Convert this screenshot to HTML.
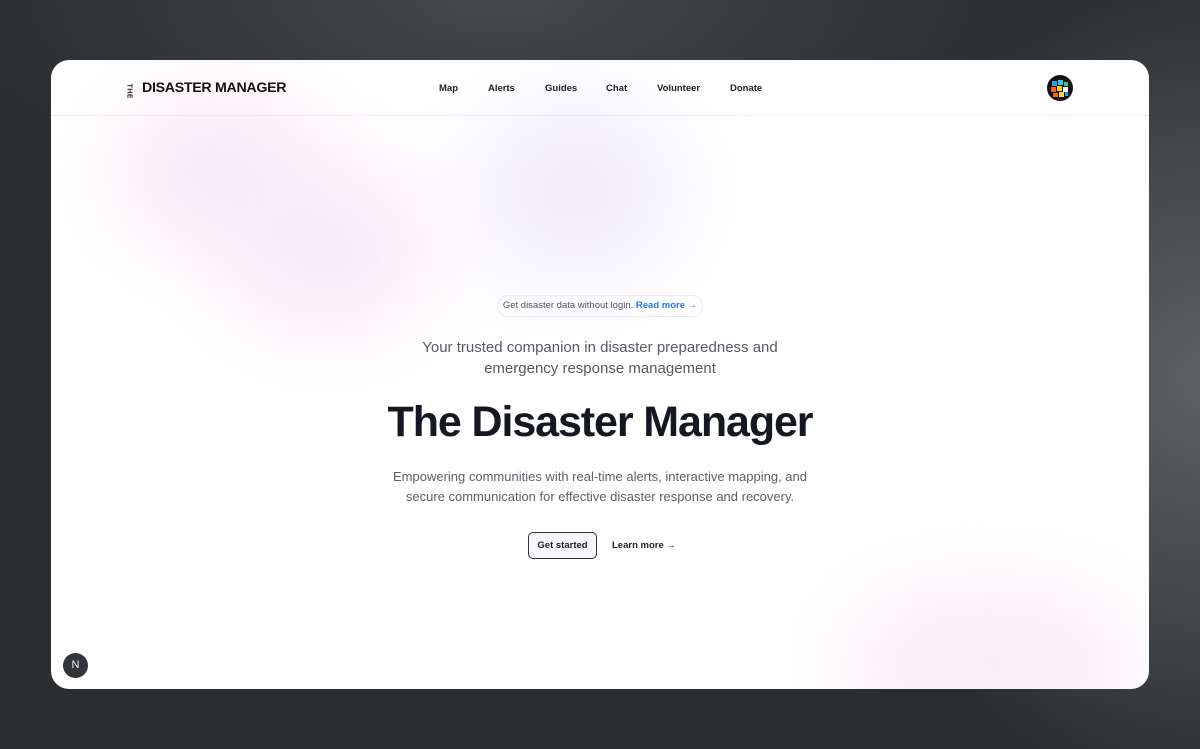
<!DOCTYPE html>
<html><head><style>
*{margin:0;padding:0;box-sizing:border-box}
body{width:1200px;height:749px;overflow:hidden;font-family:"Liberation Sans",sans-serif;
background:radial-gradient(ellipse 400px 500px at 1200px 380px,#5e6164 0%,#44474a 45%,transparent 85%),radial-gradient(ellipse 700px 260px at 500px 0px,#45484b,transparent 80%),#2b2e31;position:relative}
.card{position:absolute;left:51px;top:60px;width:1098px;height:629px;border-radius:18px;background:#fff;overflow:hidden}
.blob{position:absolute;border-radius:50%;filter:blur(50px)}
.hdr{position:absolute;left:0;top:0;width:100%;height:56px;border-bottom:1px solid #f0ecf4}
.logo{position:absolute;left:73px;top:20px;display:flex;align-items:center}
.the{font-size:7px;font-weight:bold;transform:rotate(90deg);color:#222;width:10px;letter-spacing:.5px}
.logo b{font-size:14.2px;color:#111;margin-left:8px;letter-spacing:-.3px}
nav{position:absolute;left:388px;top:23px;font-size:9.5px;font-weight:bold;color:#222}
nav span{position:absolute;white-space:nowrap}
.av{position:absolute;left:996px;top:15px;width:26px;height:26px;border-radius:50%;background:#111;overflow:hidden}
.c{position:absolute;left:0;width:1098px;text-align:center}
</style></head><body>
<div class="card">
<div class="blob" style="left:70px;top:50px;width:190px;height:120px;background:#f5e3f2"></div>
<div class="blob" style="left:180px;top:120px;width:190px;height:140px;background:#f6e4f3"></div>
<div class="blob" style="left:430px;top:50px;width:190px;height:160px;background:#ede8f9"></div>
<div class="blob" style="left:790px;top:530px;width:300px;height:150px;background:#f8ecf6"></div>
<div class="hdr">
<div class="logo"><span class="the">THE</span><b>DISASTER MANAGER</b></div>
<nav><span style="left:0">Map</span><span style="left:49px">Alerts</span><span style="left:106px">Guides</span><span style="left:167px">Chat</span><span style="left:218px">Volunteer</span><span style="left:291px">Donate</span></nav>
<div class="av"><svg width="26" height="26"><rect x="5" y="6" width="5" height="5" fill="#29a3e8"/><rect x="11" y="5" width="5" height="5" fill="#2fc6e8"/><rect x="17" y="7" width="4" height="4" fill="#35d07f"/><rect x="4" y="12" width="5" height="5" fill="#ff5a1f"/><rect x="10" y="11" width="5" height="5" fill="#f7d21f"/><rect x="16" y="12" width="5" height="5" fill="#fff"/><rect x="6" y="18" width="5" height="4" fill="#ff6a00"/><rect x="12" y="17" width="5" height="5" fill="#ffe02a"/><rect x="18" y="17" width="3" height="4" fill="#3b8bff"/></svg></div>
</div>
<div style="position:absolute;left:446px;top:235px;width:206px;height:22px;border:1px solid #ebe6f0;border-radius:11px;font-size:9.5px;color:#555;line-height:20px;text-align:center">Get disaster data without login. <span style="color:#2a7ae8;font-weight:bold">Read more →</span></div>
<div class="c" style="top:278px;font-size:15px;line-height:20.5px;color:#555a63">Your trusted companion in disaster preparedness and<br>emergency response management</div>
<div class="c" style="top:338px;font-size:43px;font-weight:bold;color:#151820;letter-spacing:-1.1px">The Disaster Manager</div>
<div class="c" style="top:407px;font-size:13px;line-height:20px;color:#5c6069">Empowering communities with real-time alerts, interactive mapping, and<br>secure communication for effective disaster response and recovery.</div>
<div style="position:absolute;left:477px;top:472px;width:69px;height:27px;border:1px solid #333;border-radius:5px;background:#f8f5fa;font-size:9.5px;font-weight:bold;color:#222;text-align:center;line-height:25px">Get started</div>
<div style="position:absolute;left:561px;top:480px;font-size:9.5px;font-weight:bold;color:#222">Learn more →</div>
<div style="position:absolute;left:12px;top:593px;width:25px;height:25px;border-radius:50%;background:#333538;color:#eee;font-size:11px;text-align:center;line-height:25px">N</div>
</div>
</body></html>
